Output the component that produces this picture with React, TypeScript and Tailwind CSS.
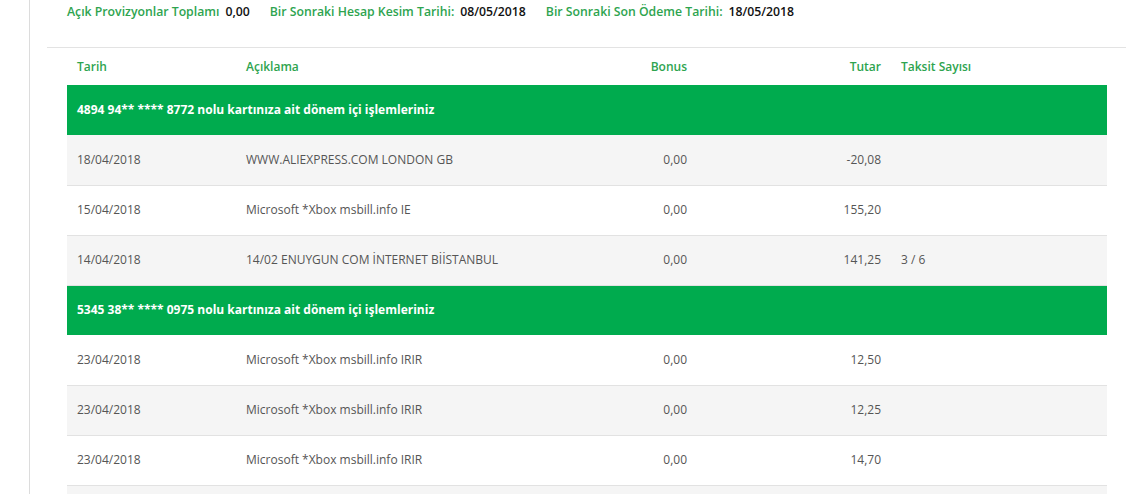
const rows = [
  { type: "group", text: "4894 94** **** 8772 nolu kartınıza ait dönem içi işlemleriniz" },
  { type: "row", date: "18/04/2018", desc: "WWW.ALIEXPRESS.COM LONDON GB", bonus: "0,00", amount: "-20,08", inst: "", shade: true },
  { type: "row", date: "15/04/2018", desc: "Microsoft *Xbox msbill.info IE", bonus: "0,00", amount: "155,20", inst: "", shade: false },
  { type: "row", date: "14/04/2018", desc: "14/02 ENUYGUN COM İNTERNET BİİSTANBUL", bonus: "0,00", amount: "141,25", inst: "3 / 6", shade: true },
  { type: "group", text: "5345 38** **** 0975 nolu kartınıza ait dönem içi işlemleriniz" },
  { type: "row", date: "23/04/2018", desc: "Microsoft *Xbox msbill.info IRIR", bonus: "0,00", amount: "12,50", inst: "", shade: false },
  { type: "row", date: "23/04/2018", desc: "Microsoft *Xbox msbill.info IRIR", bonus: "0,00", amount: "12,25", inst: "", shade: true },
  { type: "row", date: "23/04/2018", desc: "Microsoft *Xbox msbill.info IRIR", bonus: "0,00", amount: "14,70", inst: "", shade: false },
  { type: "row", date: "", desc: "", bonus: "", amount: "", inst: "", shade: true },
];

function Summary({ label, value }: { label: string; value: string }) {
  return (
    <span className="flex items-center gap-[6px]">
      <span className="text-[#2ea44f]">{label}</span>
      <span className="text-[#111]">{value}</span>
    </span>
  );
}

export default function App() {
  return (
    <div className="h-[494px] overflow-hidden bg-white font-['Open_Sans',sans-serif] text-[12px]">
      <div className="ml-[29px] h-full border-l border-[#dcdcdc]">
        <div className="flex h-[24px] items-center gap-[20px] pl-[37px] text-[12.25px] font-semibold">
          <Summary label="Açık Provizyonlar Toplamı" value="0,00" />
          <Summary label="Bir Sonraki Hesap Kesim Tarihi:" value="08/05/2018" />
          <Summary label="Bir Sonraki Son Ödeme Tarihi:" value="18/05/2018" />
        </div>
        <div className="ml-[17px] mt-[23px] border-t border-[#e3e3e3] pl-[20px] pr-[19px]">
          <table className="w-full table-fixed border-collapse">
            <colgroup>
              <col className="w-[169px]" />
              <col className="w-[324px]" />
              <col className="w-[137px]" />
              <col className="w-[194px]" />
              <col />
            </colgroup>
            <thead>
              <tr className="h-[37px] text-left font-semibold text-[#2ea44f]">
                <th className="px-[10px] font-semibold">Tarih</th>
                <th className="px-[10px] font-semibold">Açıklama</th>
                <th className="px-[10px] text-right font-semibold">Bonus</th>
                <th className="px-[10px] text-right font-semibold">Tutar</th>
                <th className="px-[10px] font-semibold">Taksit Sayısı</th>
              </tr>
            </thead>
            <tbody>
              {rows.map((r, i) =>
                r.type === "group" ? (
                  <tr key={i} className="h-[50px] bg-[#00ab4e]">
                    <td colSpan={5} className="px-[10px] font-bold text-white">
                      {r.text}
                    </td>
                  </tr>
                ) : (
                  <tr
                    key={i}
                    className={`h-[50px] border-b border-[#e2e2e2] text-[#555] ${r.shade ? "bg-[#f5f5f5]" : "bg-white"}`}
                  >
                    <td className="px-[10px]">{r.date}</td>
                    <td className="px-[10px]">{r.desc}</td>
                    <td className="px-[10px] text-right">{r.bonus}</td>
                    <td className="px-[10px] text-right">{r.amount}</td>
                    <td className="px-[10px]">{r.inst}</td>
                  </tr>
                )
              )}
            </tbody>
          </table>
        </div>
      </div>
    </div>
  );
}
